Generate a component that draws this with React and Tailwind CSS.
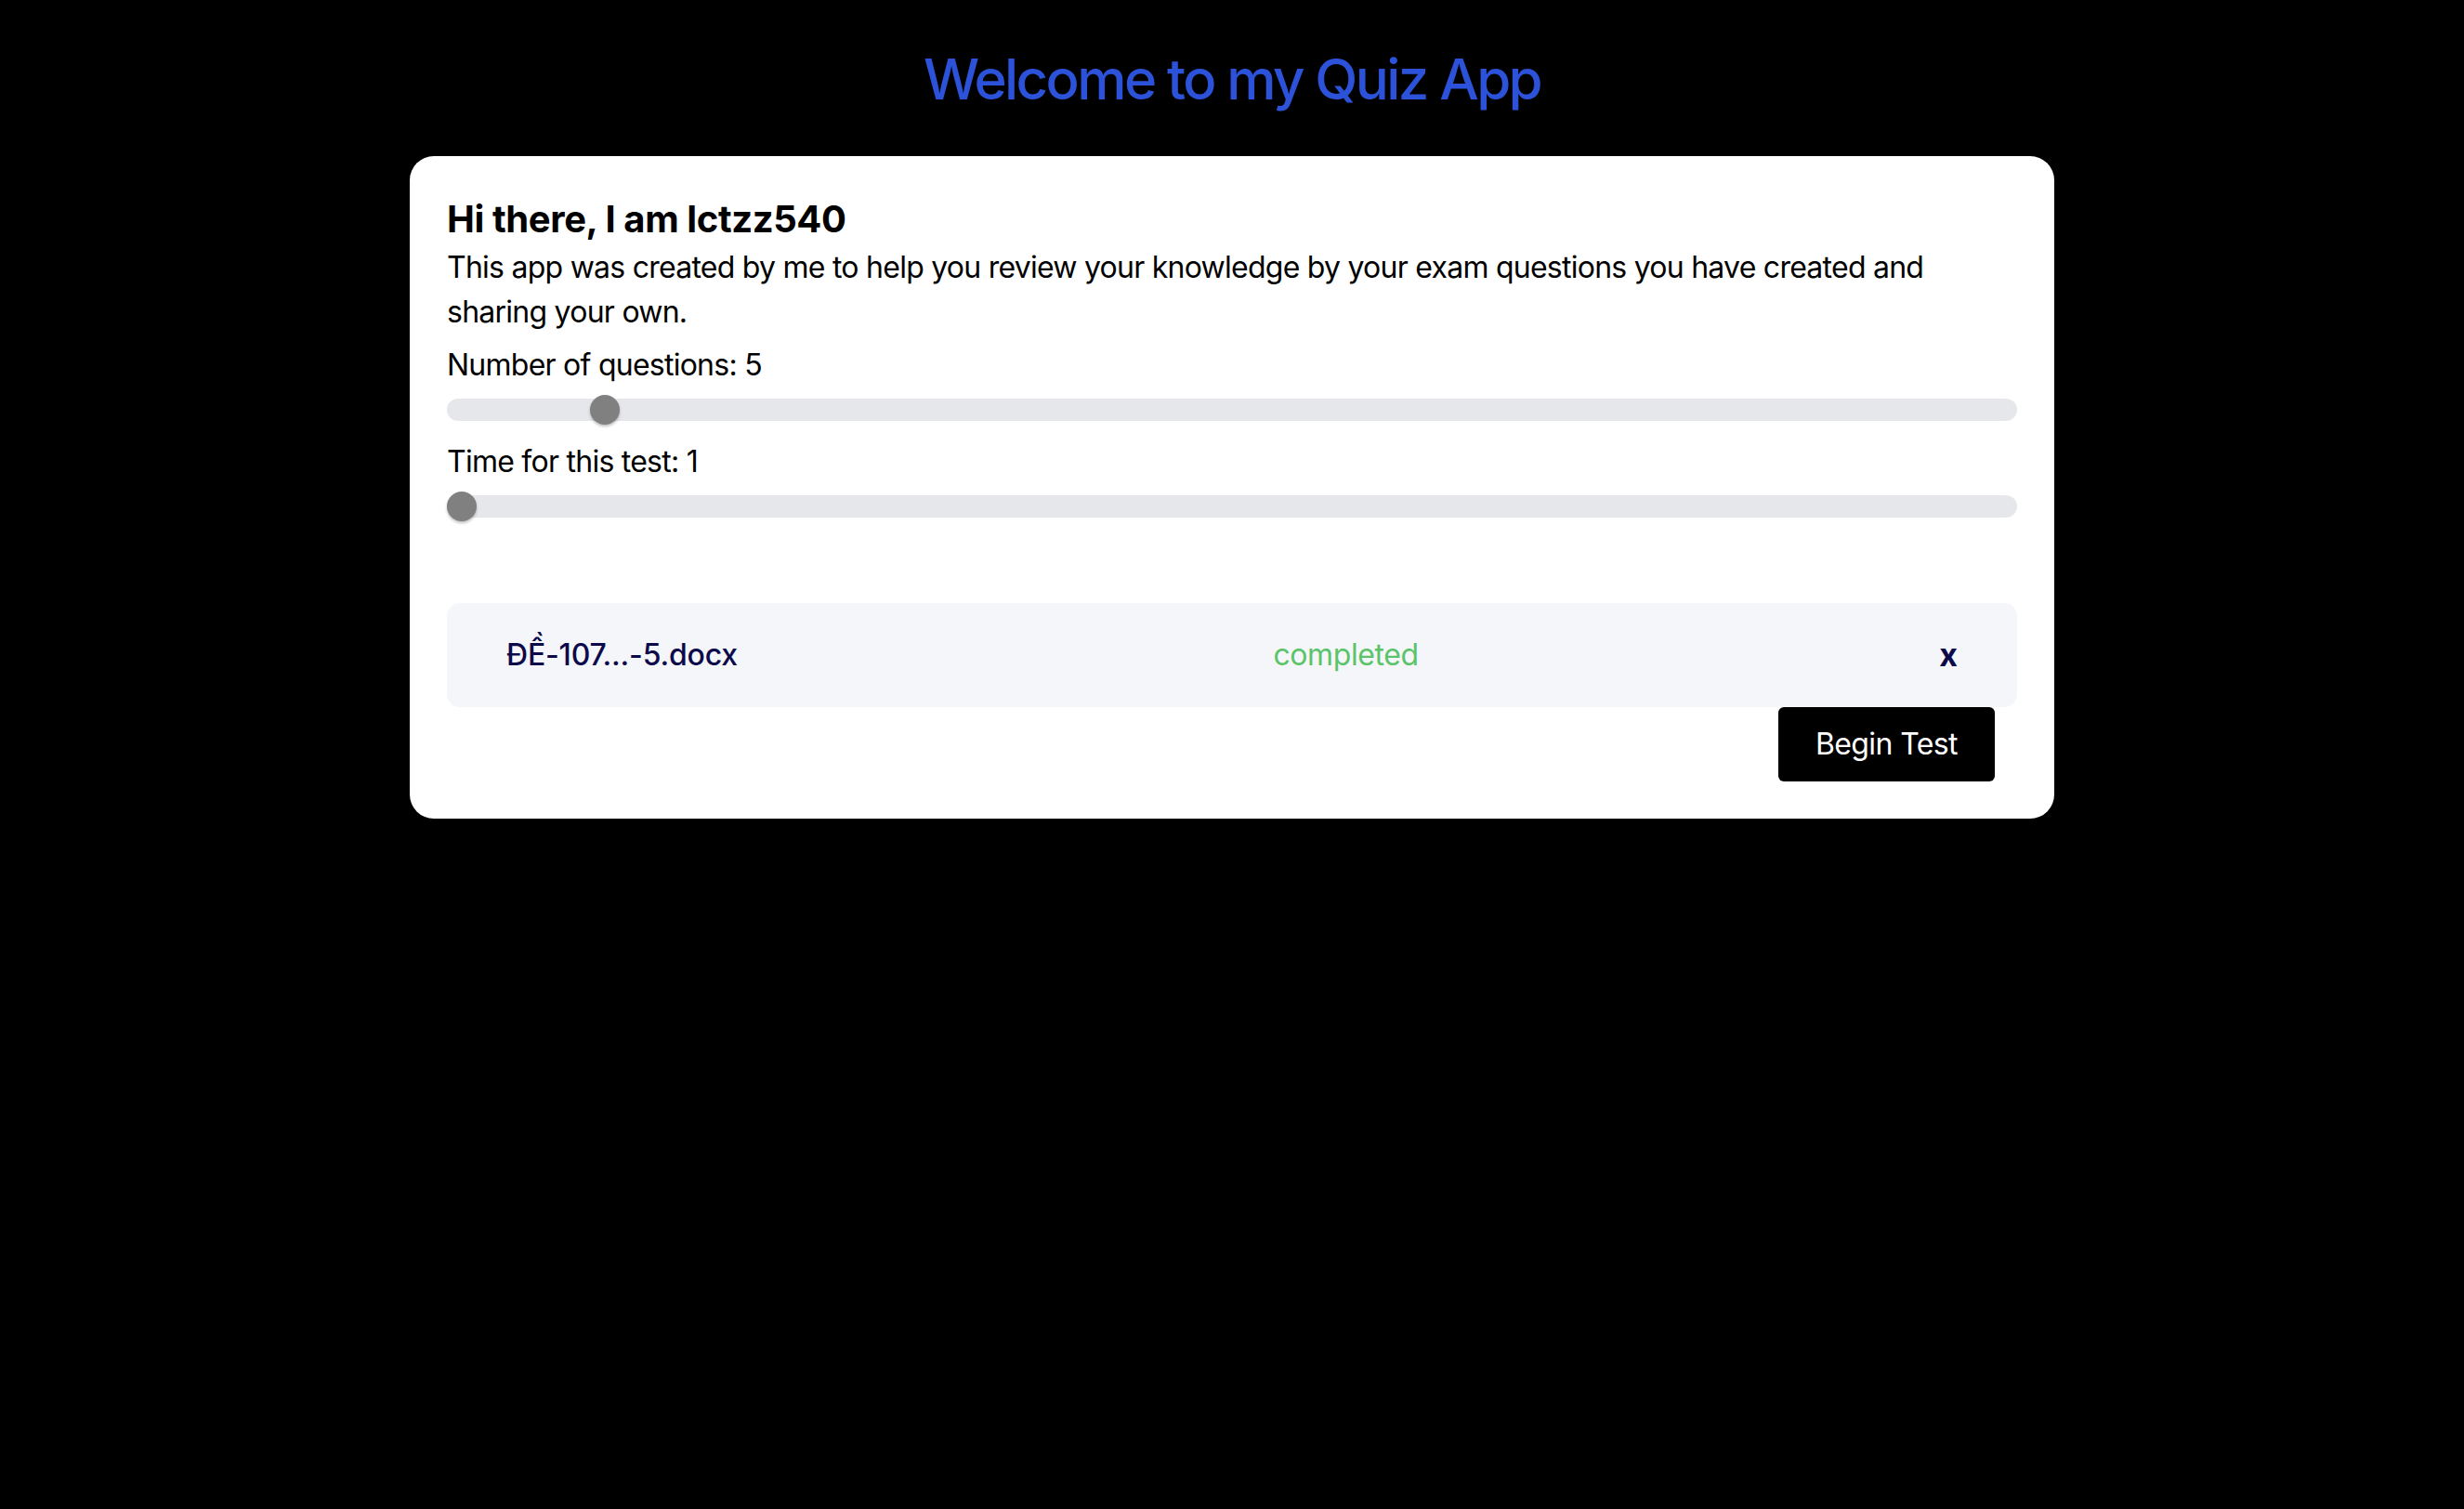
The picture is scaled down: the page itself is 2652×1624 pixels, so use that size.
import React from "react";

function Slider({ percent }) {
  return (
    <div className="relative mt-[8px] h-[32px] flex items-center">
      <div className="h-[24px] w-full rounded-full bg-[#e5e7eb]" />
      <div
        className="absolute top-0 h-[32px] w-[32px] rounded-full bg-[#808080] shadow-[0_2px_3px_rgba(0,0,0,0.25)]"
        style={{ left: `calc((100% - 32px) * ${percent})` }}
      />
    </div>
  );
}

export default function App() {
  return (
    <div
      className="min-h-screen w-full bg-black pt-[49px] pb-10"
      style={{ fontFamily: "Inter, 'Noto Sans', sans-serif" }}
    >
      <h1 className="text-center text-[60px] leading-[72px] font-medium tracking-[-2.6px] text-[#2b52d8]">
        Welcome to my Quiz App
      </h1>
      <div className="mx-auto mt-[47px] w-[1770px] rounded-[26px] bg-white p-[40px]">
        <h2 className="text-[40px] leading-[56px] font-bold text-black tracking-[-0.4px]">
          Hi there, I am lctzz540
        </h2>
        <p className="text-[32px] leading-[48px] text-black tracking-[-0.75px]">
          This app was created by me to help you review your knowledge by your exam questions you have created and sharing your own.
        </p>
        <div className="mt-[9px] text-[32px] leading-[48px] text-black tracking-[-0.75px]">Number of questions: 5</div>
        <Slider percent={0.093} />
        <div className="mt-[16px] text-[32px] leading-[48px] text-black tracking-[-0.75px]">Time for this test: 1</div>
        <Slider percent={0} />
        <div className="mt-[88px] flex items-center justify-between rounded-[14px] bg-[#f5f6f9] pl-[64px] pr-[64px] py-[32px] text-[32px] leading-[48px]">
          <span className="font-medium text-[#0d0a4b] tracking-[-0.2px]">ĐỀ-107...-5.docx</span>
          <span className="text-[#5bc46a] tracking-[-0.4px] translate-x-[8px]">completed</span>
          <span className="font-bold text-[#0d0a4b] text-[34px]">x</span>
        </div>
        <div className="flex justify-end pr-[24px]">
          <button className="rounded-[6px] bg-black px-[40px] py-[16px] text-[32px] leading-[48px] text-white tracking-[-0.6px]">
            Begin Test
          </button>
        </div>
      </div>
    </div>
  );
}
